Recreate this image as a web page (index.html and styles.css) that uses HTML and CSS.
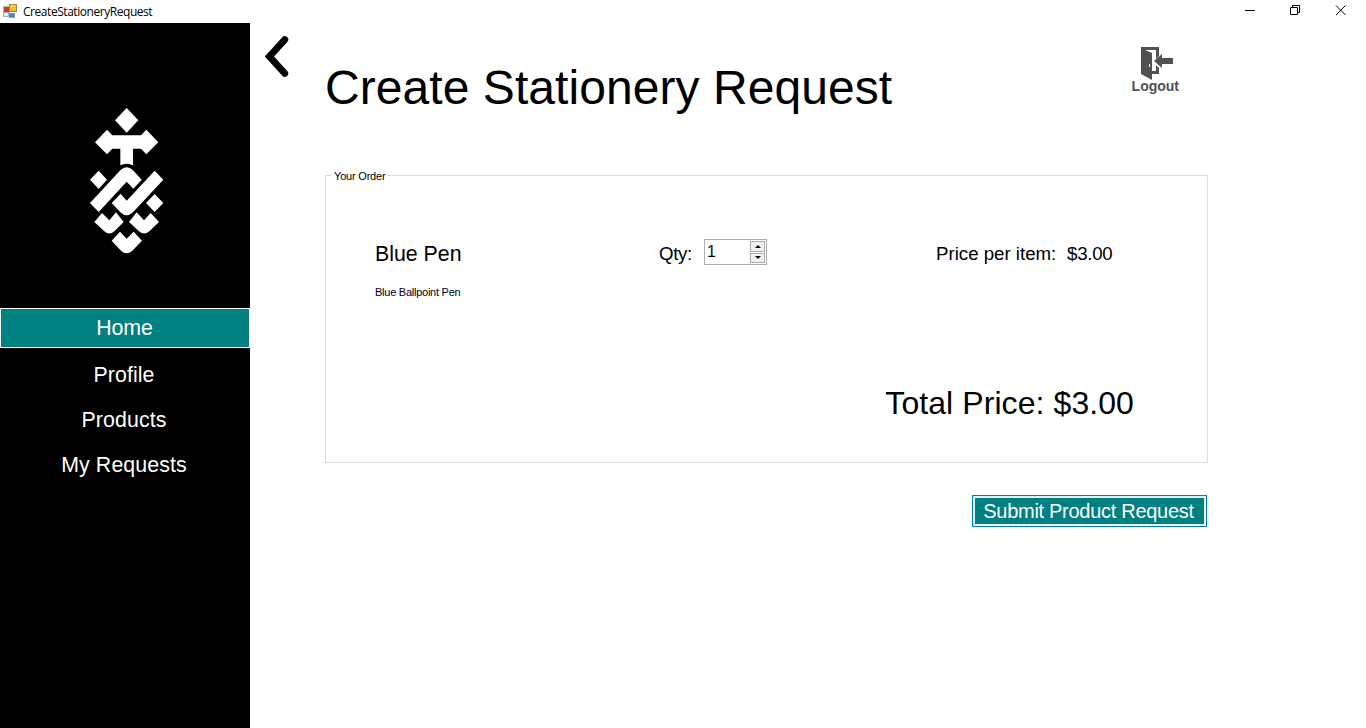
FILE: index.html
```
<!DOCTYPE html>
<html lang="en">
<head>
<meta charset="utf-8">
<title>CreateStationeryRequest</title>
<link rel="stylesheet" href="styles.css">
</head>
<body>
<header class="titlebar">
  <svg class="app-icon" width="14" height="14" viewBox="0 0 14 14">
    <rect x=".5" y="2.500" width="6" height="6" fill="#c8402c" stroke="#b4bac6"/>
    <rect x=".5" y="8.500" width="5" height="4" fill="#e4e8ee" stroke="#a4abb6"/>
    <rect x="6.500" y=".5" width="7" height="7" fill="#f6bf2c" stroke="#a88a38"/>
    <path d="M8 2h4" stroke="#ffe9a0"/>
    <rect x="6.500" y="9.500" width="5" height="4" fill="#4b83dc" stroke="#7893c4"/>
  </svg>
  <span class="caption">CreateStationeryRequest</span>
  <svg class="window-controls" width="103" height="20" viewBox="0 0 103 20" fill="none" stroke="#000">
    <path d="M0 10.500h10M45.500 7.500h7v7h-7zM47.500 7v-1.500h7v7H53M91 5.500l9.500 9.500M100.500 5.500L91 15"/>
  </svg>
</header>
<div class="shell">
  <aside class="sidebar">
    <svg class="logo" width="76" height="148" viewBox="0 0 228 444" fill="#fff">
      <path d="M113 3L148 40 113 77 78 40zM18 106L54 68 70 85H156L172 68 208 106 172 142 156 125H132V175Q113 165 94 175V125H70L54 142z"/>
      <path d="M29 191L54 218 29 246 3 218zM3 288L94 190Q113 172 132 190L158 218 133 245 113 224 29 315zM197 191L223 218 132 316Q113 334 94 316L68 288 95 260 113 281zM197 261L223 288 197 315 171 288zM16 345L39 318 61 340 81 316 104 345 76 373Q61 386 46 373zM120 345L143 316 165 340 185 318 210 345 181 373Q165 386 150 373zM68 401L93 374 113 395 134 374 159 401 130 431Q113 446 96 431z"/>
    </svg>
    <nav class="menu">
      <a class="menu-item active">Home</a>
      <a class="menu-item">Profile</a>
      <a class="menu-item">Products</a>
      <a class="menu-item">My Requests</a>
    </nav>
  </aside>
  <main class="content">
    <svg class="back" width="26" height="42" viewBox="0 0 26 42" fill="none" stroke="#000" stroke-width="6.800" stroke-linecap="round" stroke-linejoin="miter"><path d="M20.800 3.600L5.400 20.500 20.800 37.400"/></svg>
    <section class="page">
      <div class="page-head">
        <h1 class="title">Create Stationery Request</h1>
        <div class="logout">
          <svg class="logout-icon" width="34" height="34" viewBox="0 0 34 34" fill="#515153">
            <path d="M1 1H19V10L16 13V4H5L12 7V25H16V19L19 22V28H12V34L1 28z"/>
            <path d="M14 15L22 8V12H33V18H22V22z"/>
            <rect x="9" y="18" width="1" height="3" fill="#fff"/>
          </svg>
          <span class="logout-label">Logout</span>
        </div>
      </div>
      <div class="order">
        <div class="order-head"><span class="legend">Your Order</span></div>
        <div class="item">
          <span class="name">Blue Pen</span>
          <span class="qty-label">Qty:</span>
          <div class="spinner">
            <span class="value">1</span>
            <div class="steps">
              <span class="step"><svg width="6" height="3" viewBox="0 0 6 3"><path d="M0 3L3 0 6 3z"/></svg></span>
              <span class="step"><svg width="6" height="3" viewBox="0 0 6 3"><path d="M0 0L3 3 6 0z"/></svg></span>
            </div>
          </div>
          <span class="price-label">Price per item:</span>
          <span class="price">$3.00</span>
        </div>
        <div class="description">Blue Ballpoint Pen</div>
        <div class="total">Total Price: $3.00</div>
      </div>
      <button class="submit">Submit Product Request</button>
    </section>
  </main>
</div>
</body>
</html>
```

FILE: styles.css
```
* { box-sizing: border-box; }
body {
  margin: 0;
  height: 728px;
  overflow: hidden;
  background: #fff;
  color: #000;
  font-family: "Liberation Sans", Arial, sans-serif;
}
svg { display: block; flex: none; }
.titlebar { display: flex; height: 23px; padding-left: 3px; }
.app-icon { margin: 4px 6px 0 0; }
.caption { font: 12px/24px "Open Sans", "Noto Sans", sans-serif; letter-spacing: -0.45px; white-space: nowrap; }
.window-controls { margin: 0 18px 0 auto; }
.shell { display: flex; height: 705px; }
.sidebar { width: 250px; background: #000; color: #fff; padding-top: 84px; flex: none; }
.logo { margin: 0 0 53px 89px; }
.menu { display: flex; flex-direction: column; }
.menu-item { height: 45px; padding-right: 2px; font-size: 21.33px; line-height: 45px; letter-spacing: 0.1px; text-align: center; }
.menu-item.active { height: 40px; margin-bottom: 5px; padding-right: 1px; border: 1px solid #fff; background: #008080; line-height: 38px; letter-spacing: -0.1px; }
.content { display: flex; flex: 1; }
.back { margin: 13px 35px 0 14px; }
.page { width: 883px; display: flex; flex-direction: column; }
.page-head { display: flex; justify-content: space-between; height: 145px; padding-right: 28px; }
.title { margin: 37px 0 0; font-size: 48px; line-height: 56px; font-weight: normal; letter-spacing: 0.06px; white-space: nowrap; }
.logout { display: flex; flex-direction: column; align-items: center; padding-top: 23px; margin-right: 1px; color: #515153; }
.logout-icon { margin-left: 3px; }
.logout-label { font-size: 14px; line-height: 16px; font-weight: bold; margin-top: -2px; }
.order { height: 295px; display: flex; flex-direction: column; border: solid #dcdcdc; border-width: 0 1px 1px; background: linear-gradient(#dcdcdc, #dcdcdc) 0 7px / 100% 1px no-repeat; }
.order-head { height: 16px; margin: 0 -1px; padding-left: 7px; background: linear-gradient(#fff, #fff) 0 0 / 100% 7px no-repeat; line-height: 0; }
.legend { display: inline-block; padding: 0 1px 0 2px; background: #fff; font-size: 11px; line-height: 16px; letter-spacing: -0.2px; }
.item { display: flex; height: 26px; margin-top: 55px; padding-left: 49px; font-size: 18.67px; line-height: 29px; white-space: nowrap; }
.name { width: 284px; font-size: 21.33px; line-height: 31px; }
.qty-label { width: 45px; letter-spacing: -0.3px; }
.spinner { display: flex; justify-content: space-between; width: 63px; height: 26px; padding: 1px; border: 1px solid #abadb3; }
.value { padding-left: 1px; font-size: 16px; line-height: 22px; }
.steps { display: flex; flex-direction: column; gap: 1px; width: 15px; }
.step { display: flex; align-items: center; justify-content: center; height: 11px; border: 1px solid #acacac; background: #f0f0f0; }
.price-label { margin-left: 169px; width: 131px; }
.price { letter-spacing: -0.25px; }
.description { margin: 19px 0 0 49px; font-size: 11px; line-height: 16px; letter-spacing: -0.25px; color: #000020; }
.total { margin: 85px 73px 0 auto; font-size: 32px; line-height: 37px; letter-spacing: 0.08px; white-space: nowrap; }
.submit { align-self: flex-end; width: 235px; height: 32px; margin: 32px 1px 0 0; padding: 0 2px 0 0; border: 1px solid #0078d7; box-shadow: inset 0 0 0 2px #e5f1fb; background: #008080; color: #fff; font: 20px/28px "Liberation Sans", Arial, sans-serif; letter-spacing: -0.29px; white-space: nowrap; }
```
